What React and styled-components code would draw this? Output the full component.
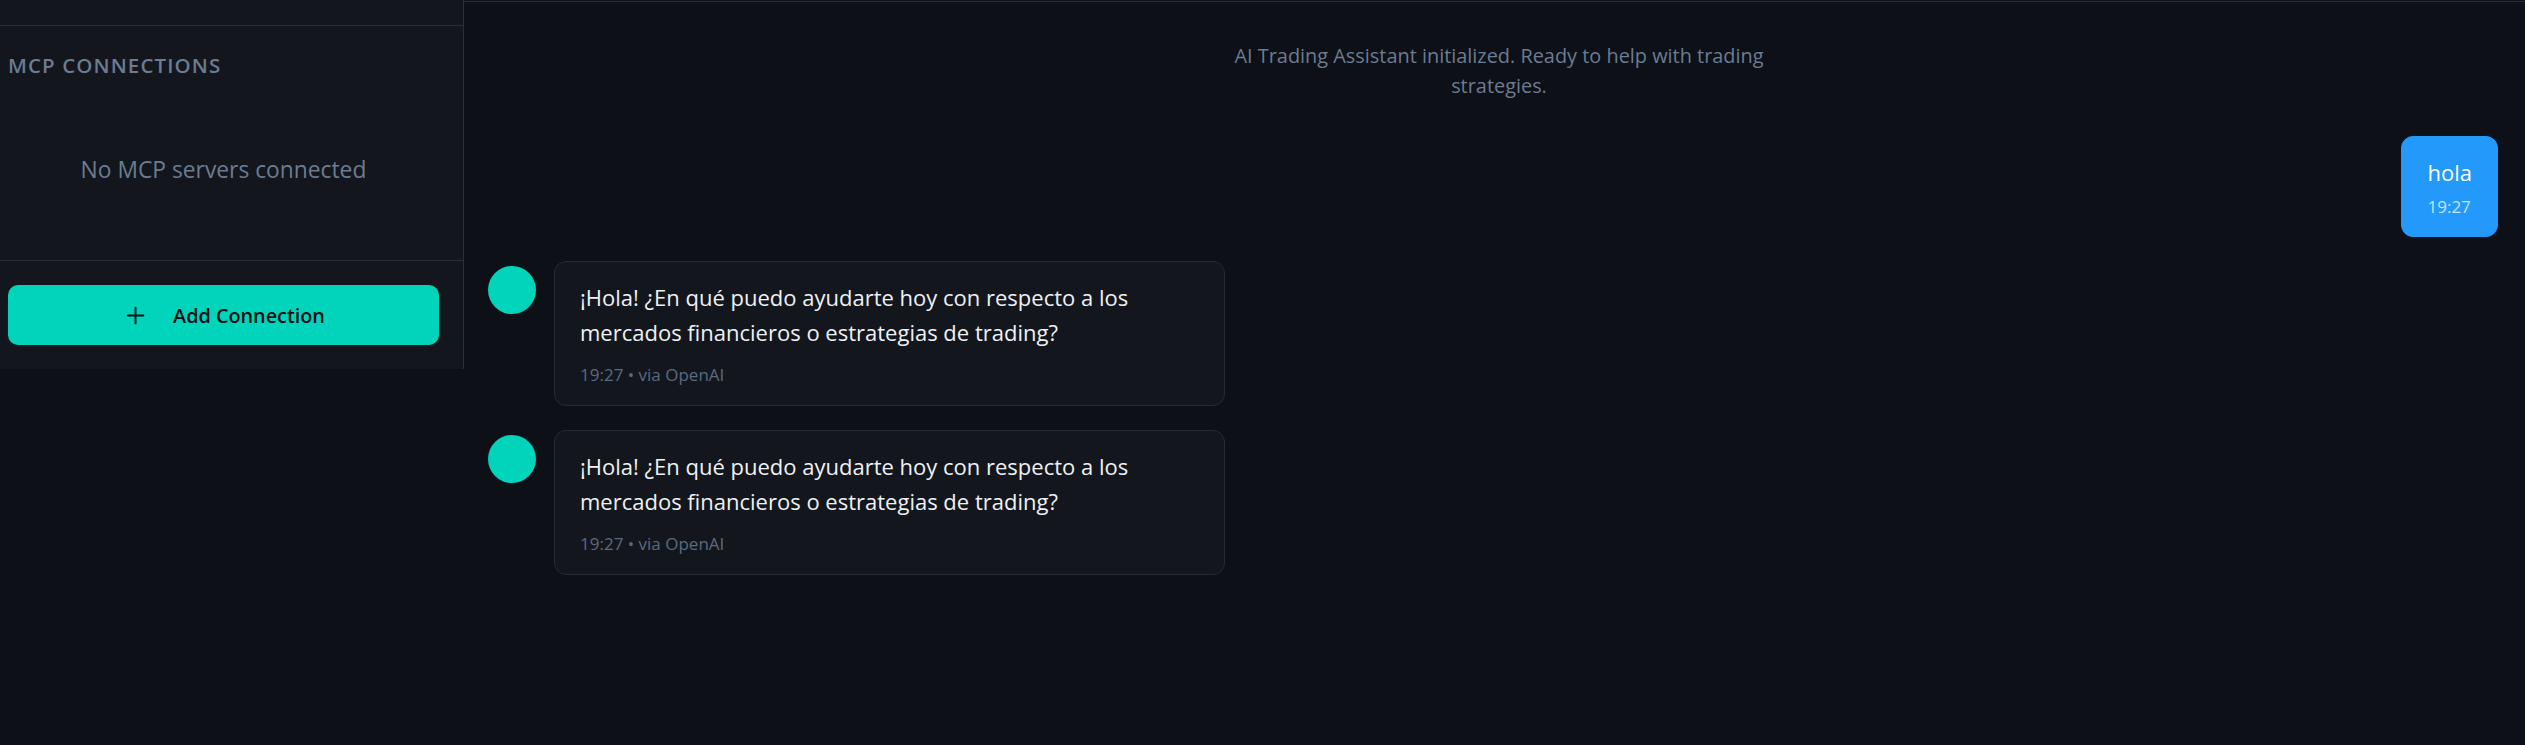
import styled, { createGlobalStyle } from "styled-components";
import { Plus } from "lucide-react";

const GlobalStyle = createGlobalStyle`
  * {
    box-sizing: border-box;
  }
  body {
    margin: 0;
    background: #0d1016;
    font-family: "Open Sans", "Noto Sans", sans-serif;
    color: #eef1f5;
  }
`;

const Layout = styled.div`
  display: flex;
  align-items: flex-start;
  width: 100%;
  height: 745px;
  overflow: hidden;
`;

const Sidebar = styled.aside`
  width: 464px;
  flex-shrink: 0;
  background: #13161c;
  border-right: 1px solid #2a2f37;
`;

const SidebarTop = styled.div`
  height: 26px;
  border-bottom: 1px solid #2a2f37;
`;

const Section = styled.section`
  padding: 24px 24px 24px 8px;
  border-bottom: ${(props) => (props.divided ? "1px solid #2a2f37" : "none")};
`;

const SectionTitle = styled.h3`
  margin: 0 0 24px;
  font-size: 20.5px;
  line-height: 30px;
  font-weight: 600;
  letter-spacing: 1.1px;
  text-transform: uppercase;
  color: #6b7c93;
`;

const EmptyState = styled.p`
  margin: 0;
  padding: 48px 0;
  text-align: center;
  font-size: 22.8px;
  line-height: 36px;
  color: #6b7c93;
`;

const AddButton = styled.button`
  display: flex;
  align-items: center;
  justify-content: center;
  gap: 24px;
  width: 100%;
  height: 60px;
  border: none;
  border-radius: 10px;
  background: #00d4bb;
  color: #0b0f14;
  font-family: inherit;
  font-size: 19.8px;
  font-weight: 600;
  cursor: pointer;
`;

const Main = styled.main`
  flex: 1;
  height: 745px;
  margin-top: 1px;
  border-top: 1px solid #2a2f37;
  background: #0d1016;
`;

const Messages = styled.div`
  display: flex;
  flex-direction: column;
  gap: 24px;
  padding: 24px 27px 24px 24px;
`;

const SystemNote = styled.div`
  align-self: center;
  max-width: 576px;
  margin-left: 12px;
  padding: 15px 0 11px;
  text-align: center;
  font-size: 19.9px;
  line-height: 30px;
  color: #6b7c93;
`;

const Row = styled.div`
  display: flex;
  align-items: flex-start;
  gap: 18px;
  justify-content: ${(props) => (props.user ? "flex-end" : "flex-start")};
`;

const Avatar = styled.div`
  width: 48px;
  height: 48px;
  margin-top: 5px;
  flex-shrink: 0;
  border-radius: 50%;
  background: #00d4bb;
`;

const Bubble = styled.div`
  max-width: 671px;
  padding: 18px 25px ${(props) => (props.user ? "17px" : "18px")};
  border-radius: 12px;
  background: ${(props) => (props.user ? "#2299fb" : "#13161c")};
  border: 1px solid ${(props) => (props.user ? "#2299fb" : "#262b33")};
  font-size: 22px;
  line-height: 35px;
  color: ${(props) => (props.user ? "#ffffff" : "#eef1f5")};
`;

const Meta = styled.div`
  margin-top: ${(props) => (props.user ? "5px" : "13px")};
  font-size: 17px;
  line-height: 24px;
  color: ${(props) => (props.user ? "#c4e3ff" : "#5b6a80")};
`;

const reply =
  "¡Hola! ¿En qué puedo ayudarte hoy con respecto a los mercados financieros o estrategias de trading?";

function AssistantMessage({ text, time, provider }) {
  return (
    <Row>
      <Avatar />
      <Bubble>
        {text}
        <Meta>
          {time} • via {provider}
        </Meta>
      </Bubble>
    </Row>
  );
}

export default function App() {
  return (
    <>
      <GlobalStyle />
      <Layout>
        <Sidebar>
          <SidebarTop />
          <Section divided>
            <SectionTitle>MCP Connections</SectionTitle>
            <EmptyState>No MCP servers connected</EmptyState>
          </Section>
          <Section>
            <AddButton>
              <Plus size={27} strokeWidth={1.7} />
              Add Connection
            </AddButton>
          </Section>
        </Sidebar>

        <Main>
          <Messages>
            <SystemNote>
              AI Trading Assistant initialized. Ready to help with trading
              strategies.
            </SystemNote>
            <Row user>
              <Bubble user>
                hola
                <Meta user>19:27</Meta>
              </Bubble>
            </Row>
            <AssistantMessage text={reply} time="19:27" provider="OpenAI" />
            <AssistantMessage text={reply} time="19:27" provider="OpenAI" />
          </Messages>
        </Main>
      </Layout>
    </>
  );
}
